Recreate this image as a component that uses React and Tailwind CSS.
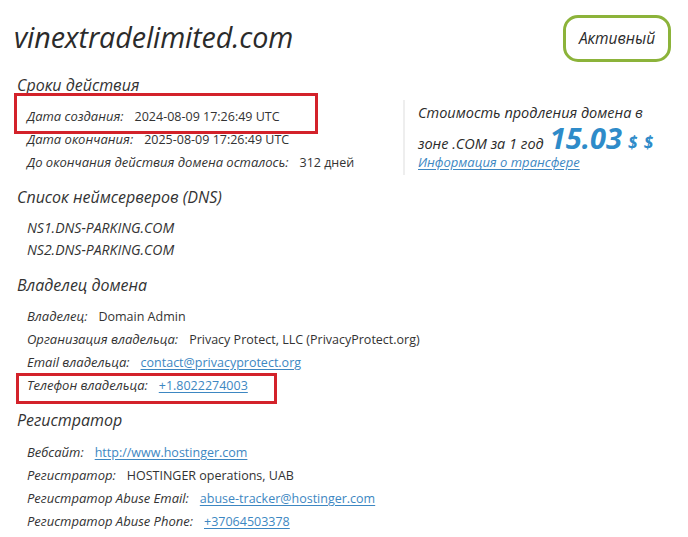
const label = "font-['Open_Sans'] italic text-[13px] text-[#333]";
const value = "font-['Open_Sans'] text-[12.5px] text-[#333]";
const link = "font-['Open_Sans'] text-[12.5px] text-[#3d87c2] underline underline-offset-2";
const heading = "h-[23px] leading-[23px] font-['Open_Sans'] italic font-medium text-[16px] text-[#333]";

function Row({ name, children, boxed }) {
  return (
    <div className="relative h-[23px] leading-[23px] flex items-baseline gap-[11px] pl-[13px] whitespace-nowrap">
      {boxed}
      <span className={label}>{name}</span>
      {children}
    </div>
  );
}

export default function App() {
  return (
    <div className="w-[688px] h-[537px] bg-white overflow-hidden px-[14px]">
      {/* Header */}
      <div className="flex justify-between items-start pt-[15px] pr-[3px]">
        <h1 className="mt-[5px] h-[34px] leading-[34px] font-['Open_Sans'] italic font-medium text-[28.7px] text-[#2b2b2b] tracking-[-0.1px]">
          vinextradelimited.com
        </h1>
        <div className="h-[47px] w-[108px] border-[3px] border-[#8cb33a] rounded-[15px] flex items-center justify-center font-['Open_Sans'] italic font-medium text-[15.5px] text-[#2b2b2b]">
          Активный
        </div>
      </div>

      {/* Сроки действия */}
      <div className="flex mt-[12px]">
        <div className="w-[389px]">
          <div className={heading + " pl-[3px]"}>Сроки действия</div>
          <div className="mt-[8px]">
            <Row
              name="Дата создания:"
              boxed={<div className="absolute left-0 top-[-12px] w-[304px] h-[41px] border-[3px] border-[#d3222a]"></div>}
            >
              <span className={value}>2024-08-09 17:26:49 UTC</span>
            </Row>
            <Row name="Дата окончания:">
              <span className={value}>2025-08-09 17:26:49 UTC</span>
            </Row>
            <Row name="До окончания действия домена осталось:">
              <span className={value}>312 дней</span>
            </Row>
          </div>
        </div>
        <div className="mt-[26px] h-[75px] border-l-2 border-[#eeeeee] pl-[13px] font-['Open_Sans'] italic">
          <div className="text-[14.5px] font-medium text-[#2b2b2b] leading-[20px] mt-[3px]">Стоимость продления домена в</div>
          <div className="flex items-baseline gap-[6px] h-[28px] leading-[26px] mt-[2px] whitespace-nowrap">
            <span className="text-[14.5px] font-medium text-[#2b2b2b]">зоне .COM за 1 год</span>
            <span className="text-[29px] leading-[26px] font-bold text-[#2e8bc9]">15.03</span>
            <span className="text-[17px] font-bold text-[#2e8bc9] tracking-[1px]">$ $</span>
          </div>
          <a className="block text-[13px] text-[#3d87c2] underline underline-offset-2 leading-[18px]">Информация о трансфере</a>
        </div>
      </div>

      {/* DNS */}
      <div className="mt-[11px]">
        <div className={heading + " pl-[3px]"}>Список неймсерверов (DNS)</div>
        <div className="mt-[8px] pl-[13px] font-['Open_Sans'] italic text-[14px] text-[#333]">
          <div className="h-[22px] leading-[22px]">NS1.DNS-PARKING.COM</div>
          <div className="h-[22px] leading-[22px]">NS2.DNS-PARKING.COM</div>
        </div>
      </div>

      {/* Владелец */}
      <div className="mt-[13px]">
        <div className={heading + " pl-[3px]"}>Владелец домена</div>
        <div className="mt-[8px]">
          <Row name="Владелец:">
            <span className={value}>Domain Admin</span>
          </Row>
          <Row name="Организация владельца:">
            <span className={value}>Privacy Protect, LLC (PrivacyProtect.org)</span>
          </Row>
          <Row name="Email владельца:">
            <a className={link}>contact@privacyprotect.org</a>
          </Row>
          <Row
            name="Телефон владельца:"
            boxed={<div className="absolute left-[2px] top-[-1px] w-[261px] h-[31px] border-[3px] border-[#d3222a]"></div>}
          >
            <a className={link}>+1.8022274003</a>
          </Row>
        </div>
      </div>

      {/* Регистратор */}
      <div className="mt-[12px]">
        <div className={heading + " pl-[3px]"}>Регистратор</div>
        <div className="mt-[9px]">
          <Row name="Вебсайт:">
            <a className={link}>http://www.hostinger.com</a>
          </Row>
          <Row name="Регистратор:">
            <span className={value}>HOSTINGER operations, UAB</span>
          </Row>
          <Row name="Регистратор Abuse Email:">
            <a className={link}>abuse-tracker@hostinger.com</a>
          </Row>
          <Row name="Регистратор Abuse Phone:">
            <a className={link}>+37064503378</a>
          </Row>
        </div>
      </div>
    </div>
  );
}
